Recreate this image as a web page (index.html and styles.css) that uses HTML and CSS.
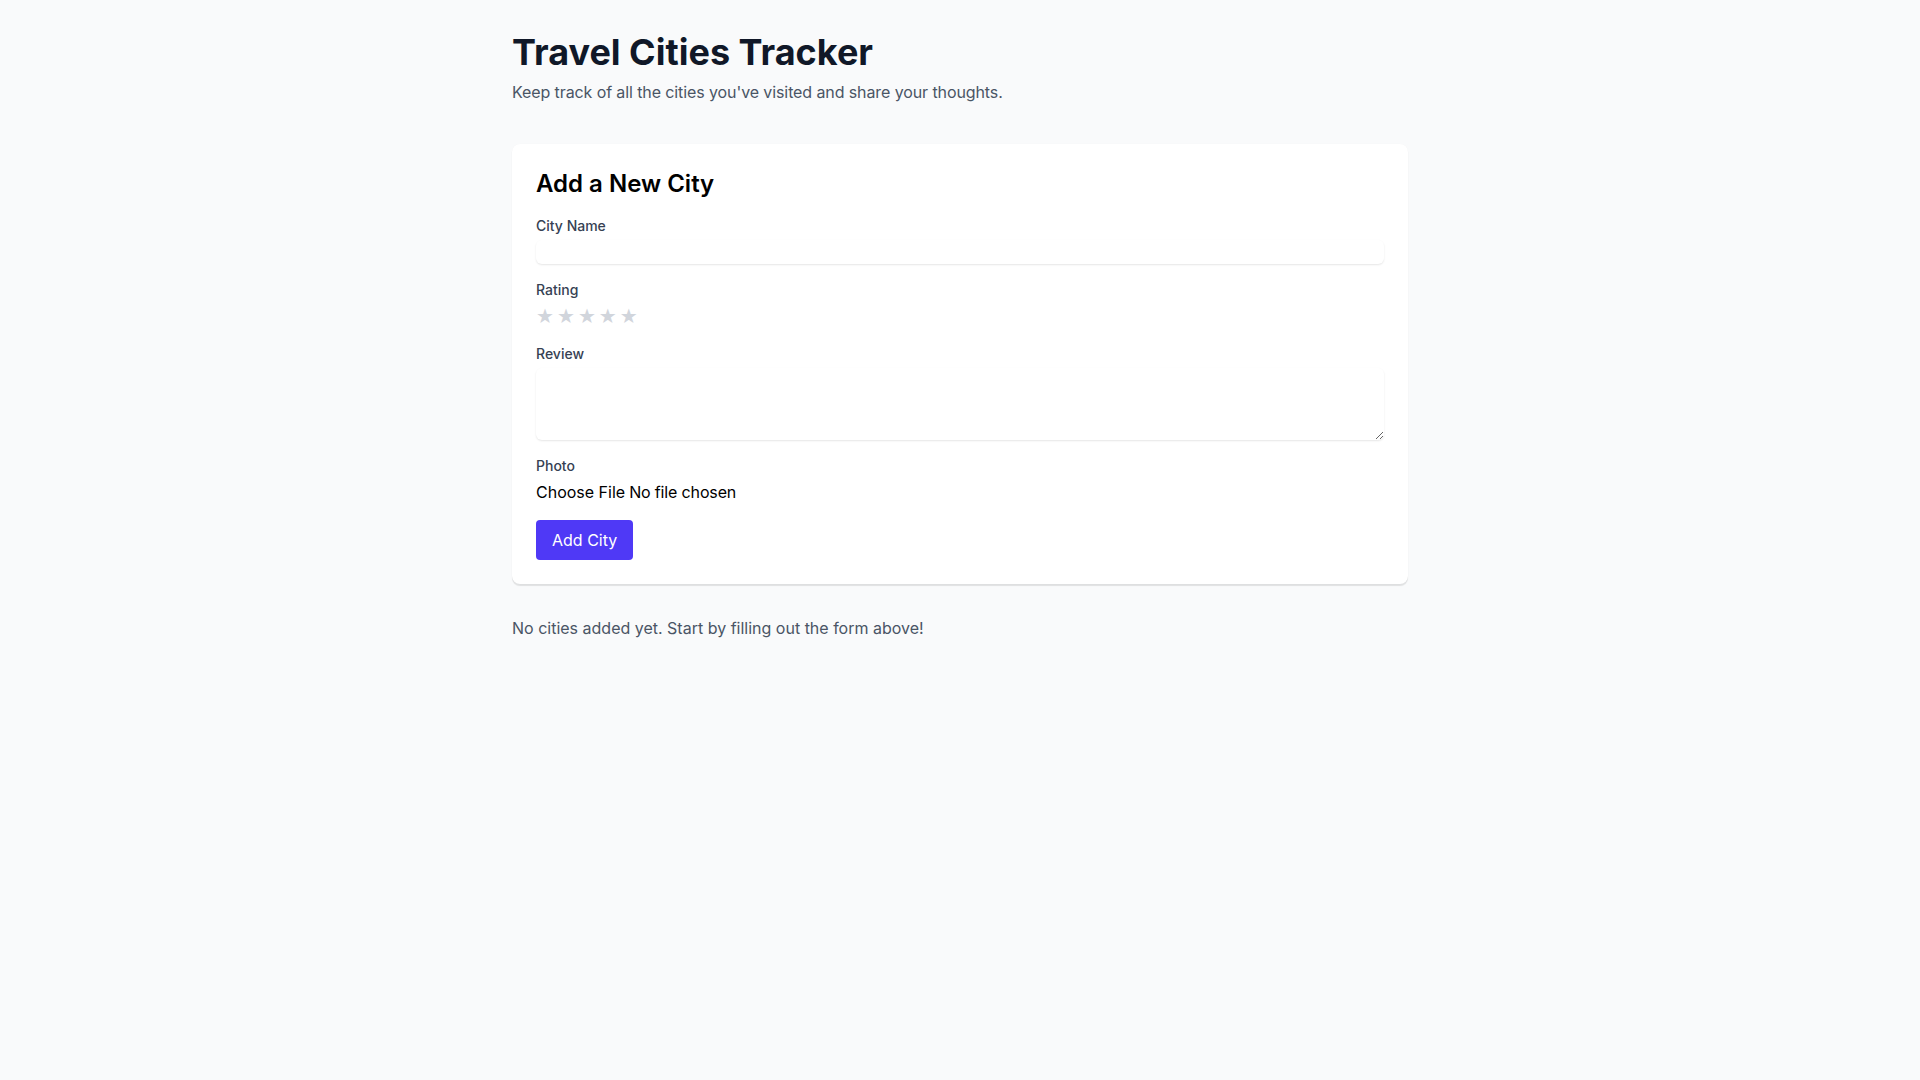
FILE: index.html
```html
<!DOCTYPE html>
<html lang="en">
<head>
<meta charset="utf-8">
<title>Travel Cities Tracker</title>
<link rel="stylesheet" href="styles.css">
</head>
<body>
<main class="container">
  <header class="page-header">
    <h1 class="title">Travel Cities Tracker</h1>
    <p class="subtitle">Keep track of all the cities you've visited and share your thoughts.</p>
  </header>

  <section class="card">
    <h2 class="card-title">Add a New City</h2>
    <form class="form">
      <div class="field">
        <label class="label" for="city">City Name</label>
        <input class="input" id="city" type="text">
      </div>
      <div class="field">
        <label class="label">Rating</label>
        <div class="stars">
          <button type="button" class="star">★</button>
          <button type="button" class="star">★</button>
          <button type="button" class="star">★</button>
          <button type="button" class="star">★</button>
          <button type="button" class="star">★</button>
        </div>
      </div>
      <div class="field">
        <label class="label" for="review">Review</label>
        <textarea class="input textarea" id="review" rows="3"></textarea>
      </div>
      <div class="field">
        <label class="label" for="photo">Photo</label>
        <input class="file" id="photo" type="file">
      </div>
      <div>
        <button type="button" class="submit">Add City</button>
      </div>
    </form>
  </section>

  <p class="empty">No cities added yet. Start by filling out the form above!</p>
</main>
</body>
</html>
```

FILE: styles.css
```css
*, *::before, *::after { box-sizing: border-box; margin: 0; padding: 0; border: 0 solid; }

html, body {
  font-family: Inter, "Noto Sans", "Liberation Sans", sans-serif;
  font-size: 16px;
  line-height: 1.5;
}

body {
  background: #f9fafb;
  color: #000;
  min-height: 100vh;
}

.container {
  max-width: 896px;
  margin: 0 auto;
  padding: 32px 0;
}

.page-header { margin-bottom: 40px; }

.title {
  font-size: 36px;
  line-height: 40px;
  font-weight: 700;
  color: #101828;
  margin-bottom: 8px;
}

.subtitle {
  color: #4a5565;
  font-size: 16px;
  line-height: 24px;
  letter-spacing: -0.1px;
}

.card {
  background: #fff;
  border-radius: 8px;
  padding: 24px;
  box-shadow: 0 2px 1px 0 rgba(0,0,0,0.1), 0 0 1px 0 rgba(0,0,0,0.04);
  margin-bottom: 32px;
}

.card-title {
  font-size: 24px;
  line-height: 32px;
  font-weight: 600;
  margin-bottom: 16px;
}

.form {
  display: flex;
  flex-direction: column;
  gap: 16px;
}

.label {
  display: block;
  font-size: 14px;
  line-height: 20px;
  font-weight: 500;
  color: #364153;
  margin-bottom: 4px;
}

.input {
  display: block;
  width: 100%;
  font: inherit;
  line-height: 24px;
  height: 24px;
  background: transparent;
  color: inherit;
  border-radius: 6px;
  box-shadow: 0 1px 2px 0 rgba(0,0,0,0.1);
  outline: none;
}

.textarea {
  height: 72px;
  resize: vertical;
}

.stars {
  display: flex;
  gap: 3px;
  height: 24px;
  align-items: center;
}

.star {
  font-family: "DejaVu Sans", sans-serif;
  font-size: 20px;
  line-height: 24px;
  background: transparent;
  color: #d1d5dc;
  cursor: pointer;
}

.file {
  display: block;
  font: inherit;
  line-height: 24px;
  letter-spacing: -0.15px;
  color: #000;
}

.file::file-selector-button {
  font: inherit;
  border: 0;
  background: transparent;
  padding: 0;
  margin: 0 4px 0 0;
  color: inherit;
}

.submit {
  font: inherit;
  background: #4f39f6;
  color: #fff;
  padding: 8px 16px;
  line-height: 24px;
  border-radius: 4px;
  cursor: pointer;
}

.empty {
  color: #4a5565;
  font-size: 16px;
  line-height: 24px;
}
```
